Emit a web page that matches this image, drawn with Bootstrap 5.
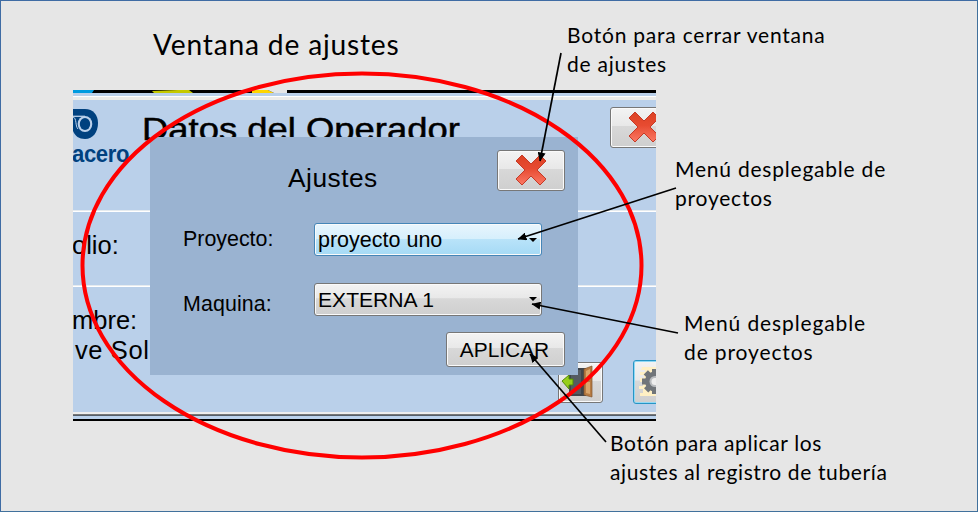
<!DOCTYPE html>
<html lang="es">
<head>
<meta charset="utf-8">
<meta name="viewport" content="width=device-width, initial-scale=1">
<title>Ventana de ajustes</title>
<link href="https://cdn.jsdelivr.net/npm/bootstrap@5.3.0/dist/css/bootstrap.min.css" rel="stylesheet">
<style>
body{width:978px;height:512px;background:#e6e6e6;color:#000;font-family:"Liberation Sans",Arial,sans-serif}
.slide{width:978px;height:512px;border:1px solid #41719c;border-top-color:#3f6ca4;border-left-color:#3f6ca4}
.canvas{left:-1px;top:-1px}
.place{position:absolute;white-space:nowrap}
.slide-title{left:153px;top:25px;font:28.2px/38px Lato,sans-serif;letter-spacing:.8px;margin:0}
.note{font:21px/29px Lato,sans-serif;letter-spacing:.78px;margin:0}
.n1{left:567px;top:20px}.n2{left:675px;top:154px}.n3{left:684px;top:308px;letter-spacing:.88px}.n4{left:610px;top:428px;letter-spacing:.62px}
.app{left:73px;top:90px;width:583px;height:331px;background:#bad0ea;overflow:hidden}
.strip{height:3px;background:#000}
.strip svg,.art{display:block}
.topline{height:7px;border-top:3px solid #bad0ea;background:linear-gradient(#fff 0 1px,#ececea 1px)}
.head{height:110px}
.brand{width:69px;padding-top:9px}
.brand-name{color:#00417f;font-weight:700;font-size:24px;line-height:26px;letter-spacing:-.4px;transform:scaleX(.92);transform-origin:0 0;margin:2px 0 0 -1px}
.app-title{font-size:32px;line-height:36px;transform:scaleX(1.138);transform-origin:0 0;-webkit-text-stroke:.5px #000;margin:11px 0 0}
.rule{height:2px;background:linear-gradient(#e6ebef 50%,#fff 50%)}
.field{height:73px;padding-top:18px;margin-left:-1px;font-size:25.5px;line-height:31px}
.field-sub{padding-left:3px;letter-spacing:.6px;margin-top:-1px}
.winbtn{height:41px;width:68px;border:1px solid #777;border-radius:3px;background:linear-gradient(#f3f3f3,#e8e8e8 46%,#d8d8d8 47%,#cfcfcf);box-shadow:inset 0 0 0 1px #fafafa;padding:0;color:#000;flex:none}
.winbtn .cross{margin:-1px auto 0}
.app-close{margin:7px -22px 0 auto}
.tools{height:44px;margin-bottom:8px;padding-left:485px}
.door{width:45px;margin-right:30px;margin-top:2px}
.gear{height:44px;border-color:#2795c5;box-shadow:inset 0 0 0 1px #91d9f5}
.foot{height:9px;background:linear-gradient(#eee 0 2px,#777 2px 3px,#555f6a 3px 4px,#bcd3ed 4px 7px,#000 7px)}
.dialog-box{left:150px;top:137px;width:428px;height:238px;background:#9ab3d1;padding:13px 13px 0 33px}
.dlg-title{font-size:26.3px;line-height:32px;letter-spacing:.5px;margin:12px 0 0 105px}
.row-a{margin-top:29px}
.row-b{margin-top:27px}
.lbl{width:131px;font-size:21.4px;line-height:32px}
.row-b .lbl{padding-top:5px;height:33px;letter-spacing:.1px}
.combo{width:228px;height:33px;font-size:21.5px;line-height:31px;padding:1px 4px 0 3px}
.combo.blue{border-color:#4586b8;background:linear-gradient(#e8f5fd,#d6effc 48%,#b9e3f9 49%,#a5daf5)}
.row-b .combo{font-size:21.1px;padding:0 4px 1px 3px}
.caret{width:8px;height:4px;background:#000;clip-path:polygon(0 0,100% 0,50% 100%)}
.apply{width:119px;height:35px;font-size:20.9px;line-height:33px;margin:16px 0 0 263px;padding-right:2px}
.marks{left:0;top:0;pointer-events:none}
</style>
<script src="https://cdn.jsdelivr.net/npm/bootstrap@5.3.0/dist/js/bootstrap.bundle.min.js"></script>
</head>
<body class="m-0 overflow-hidden">
<main class="slide position-relative overflow-hidden">
<div class="canvas place">
<h1 class="slide-title place">Ventana de ajustes</h1>
<section class="app place">
  <div class="strip"><svg width="583" height="3"><path fill="#009bdf" d="M0 0h21l-2 3H0z"/><path fill="#c5c900" d="M79 1l26-1h11l4 3H81z"/><path fill="#ffd500" d="M179 0h16l6 3h-22z"/><path fill="#e6e6e6" d="M195 0h19v3h-13z"/></svg></div>
  <div class="topline"></div>
  <div class="head d-flex">
    <div class="brand">
      <svg class="art" width="28" height="30" viewBox="0 0 28 30"><path fill="#00417f" d="M0 0h12c8 0 13 6 13 14 0 9-5 16-13 16C6 30 2 27 0 22z"/><path stroke="#bad0ea" stroke-width="1.3" fill="none" d="M0 7.300h12"/><ellipse cx="12" cy="15" rx="7.300" ry="8" fill="#bad0ea"/><path stroke="#bad0ea" stroke-width="1" fill="none" d="M0 8c4 1 2 9 5 12"/><ellipse cx="12" cy="15" rx="5.200" ry="6" fill="#00417f"/></svg>
      <div class="brand-name">acero</div>
    </div>
    <h2 class="app-title fw-normal">Datos del Operador</h2>
    <button class="btn winbtn app-close" aria-label="Cerrar"><svg class="art cross" width="32" height="32" viewBox="0 0 32 32"><use href="#cross"/></svg></button>
  </div>
  <div class="rule"></div>
  <div class="field">olio:</div>
  <div class="rule"></div>
  <div class="field">mbre:<div class="field-sub">ve Sol</div></div>
  <div class="tools d-flex">
    <button class="btn winbtn door" aria-label="Salir"><svg class="art" width="43" height="39" viewBox="0 0 43 39"><path fill="#41464c" d="M10 5h17v28H10z"/><path fill="#555b62" d="M12 7h10v24H12z"/><path fill="#b77b42" stroke="#83542c" stroke-width=".7" d="M25 6l8-3v31l-8-2z"/><path fill="#d9a56b" d="M27 8l4-2v11h-4zM27 19h4v12l-4-1z"/><path fill="#97ce19" stroke="#518a08" d="M3 18l7-6v4h4v6h-4v4z"/></svg></button>
    <button class="btn winbtn gear" aria-label="Ajustes"><svg class="art" width="45" height="42" viewBox="0 0 45 42"><path fill="#fff0c4" d="M8 6h20v29H6v-3h3v-4H5v-3h4v-4H6v-4h4v-3H6v-3h5V9H7z"/><g fill="#70757a"><circle cx="21" cy="20.500" r="10"/><path d="M18 8h6v25h-6zM8 17.500h25v6H8z"/><path d="M18 8h6v25h-6zM8 17.500h25v6H8z" transform="rotate(45 21 20.500)"/></g><circle cx="21" cy="20.500" r="5.500" fill="#b9bcbf"/><circle cx="21" cy="20.500" r="3.500" fill="#eee"/></svg></button>
  </div>
  <div class="foot"></div>
</section>
<section class="dialog-box place">
  <div class="d-flex justify-content-between">
    <h3 class="dlg-title fw-normal">Ajustes</h3>
    <button class="btn winbtn" aria-label="Cerrar ajustes"><svg class="art cross" width="32" height="32" viewBox="0 0 32 32"><defs><linearGradient id="red" x2="0" y2="1"><stop stop-color="#dc4224"/><stop offset=".45" stop-color="#e74b31"/><stop offset="1" stop-color="#fb7965"/></linearGradient></defs><path id="cross" fill="url(#red)" stroke="#c53a27" stroke-linejoin="round" d="M7 1l9 9 9-9 6 6-9 9 9 9-6 6-9-9-9 9-6-6 9-9-9-9z"/></svg></button>
  </div>
  <div class="row-a d-flex"><span class="lbl">Proyecto:</span><button class="btn winbtn combo blue d-flex align-items-center justify-content-between">proyecto uno<span class="caret"></span></button></div>
  <div class="row-b d-flex"><span class="lbl">Maquina:</span><button class="btn winbtn combo d-flex align-items-center justify-content-between">EXTERNA 1<span class="caret"></span></button></div>
  <button class="btn winbtn apply d-block">APLICAR</button>
</section>
<p class="note place n1">Botón para cerrar ventana<br>de ajustes</p>
<p class="note place n2">Menú desplegable de<br>proyectos</p>
<p class="note place n3">Menú desplegable<br>de proyectos</p>
<p class="note place n4">Botón para aplicar los<br>ajustes al registro de tubería</p>
<svg class="marks place" width="978" height="512" viewBox="0 0 978 512">
  <defs><marker id="tip" markerUnits="userSpaceOnUse" markerWidth="9" markerHeight="8" refX="8.500" refY="4" orient="auto"><path d="M0 0l9 4-9 4z"/></marker></defs>
  <ellipse cx="362" cy="265.500" rx="279.500" ry="192" fill="none" stroke="#f00" stroke-width="4"/>
  <g stroke="#000" stroke-width="1.700" fill="none">
    <path d="M561 53L540 161" marker-end="url(#tip)"/><path d="M676 188L518 239" marker-end="url(#tip)"/><path d="M678 333L532 304" marker-end="url(#tip)"/><path d="M606 442L530 354" marker-end="url(#tip)"/>
  </g>
</svg>
</div>
</main>
</body>
</html>
